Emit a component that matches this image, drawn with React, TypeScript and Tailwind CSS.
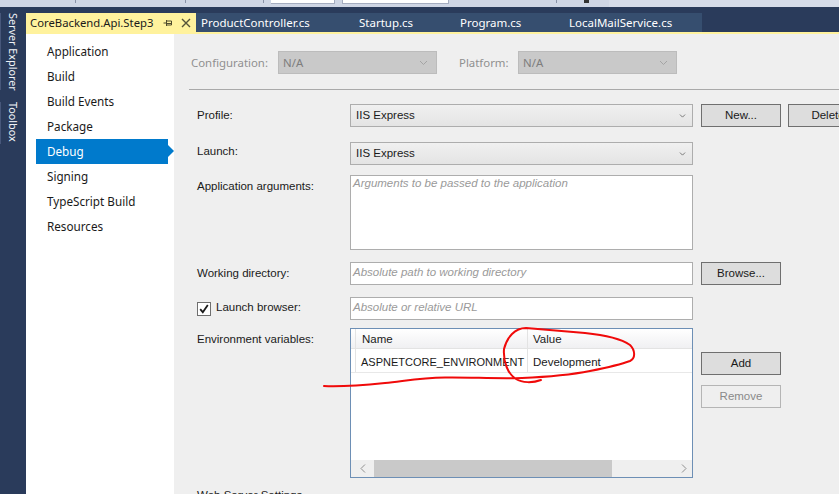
import React from "react";

const font = { fontFamily: '"Noto Sans", sans-serif' };

function Chevron({ className = "" }: { className?: string }) {
  return (
    <svg width="9" height="6" viewBox="0 0 9 6" className={className} fill="none" stroke="currentColor" strokeWidth="1">
      <path d="M1 1 L4.5 4.5 L8 1" />
    </svg>
  );
}

function Select({ label, width, disabled }: { label: string; width: string; disabled?: boolean }) {
  return disabled ? (
    <div className={`${width} h-[23px] flex items-center justify-between pl-1 pr-2 bg-[#c9c9c9] border border-[#bcbcbc] text-[#7d7d7d]`}>
      <span>{label}</span>
      <Chevron className="text-[#a4a4a4]" />
    </div>
  ) : (
    <div className={`${width} h-[23px] flex items-center justify-between pl-[5px] pr-[5px] bg-gradient-to-b from-[#f0f0f0] to-[#e4e4e4] border border-[#adadad] text-[#1a1a1a] font-['Liberation_Sans'] text-[11.5px]`}>
      <span className="pb-[2px]">{label}</span>
      <Chevron className="text-[#555555] scale-75" />
    </div>
  );
}

function Btn({ label, disabled, className = "" }: { label: string; disabled?: boolean; className?: string }) {
  return (
    <div
      className={`h-[23px] w-20 shrink-0 flex items-center justify-center border font-['Liberation_Sans'] text-[11.5px] pb-[1px] ${
        disabled ? "border-[#b5b5b5] text-[#8a8a8a] bg-[#efefef]" : "border-[#6f6f6f] text-[#1a1a1a] bg-[#dddddd]"
      } ${className}`}
    >
      {label}
    </div>
  );
}

function Input({ placeholder }: { placeholder: string }) {
  return (
    <div className="w-[343px] h-[23px] shrink-0 flex items-center pl-[2px] pb-[3px] bg-white border border-[#adadad] italic text-[#9a9a9a]">
      {placeholder}
    </div>
  );
}

function Label({ children, className = "" }: { children: React.ReactNode; className?: string }) {
  return <div className={`w-[153px] shrink-0 text-[#1a1a1a] ${className}`}>{children}</div>;
}

const nav = ["Application", "Build", "Build Events", "Package", "Debug", "Signing", "TypeScript Build", "Resources"];

export default function App() {
  return (
    <div style={font} className="relative w-[839px] h-[494px] overflow-hidden flex flex-col text-[12px] leading-[16px] bg-[#2a3b5b]">
      {/* IDE toolbar strip */}
      <div className="h-[7px] shrink-0 flex bg-[#d6dce9]">
        <div className="w-[609px] flex items-start bg-[#cfd6e5]">
          <div className="ml-[75px] w-px h-[3px] bg-[#8a93a8]" />
          <div className="ml-[109px] w-px h-[3px] bg-[#8a93a8]" />
          <div className="ml-[77px] w-px h-[3px] bg-[#8a93a8]" />
          <div className="ml-[7px] w-[64px] h-[4px] bg-white border-r border-b border-[#a5adc0]" />
          <div className="ml-[7px] w-[107px] h-[4px] bg-white border-x border-b border-[#a5adc0]" />
          <div className="ml-[107px] w-px h-[3px] bg-[#8a93a8]" />
          <div className="ml-[27px] w-[5px] h-[3px] bg-[#333333]" />
        </div>
      </div>

      <div className="flex-1 min-h-0 flex">
        {/* Side rail */}
        <div className="w-[26px] shrink-0 pt-[6px] flex flex-col items-stretch gap-[12px] text-[#f1f3f7] text-[10.8px]">
          <div className="h-[77px] flex justify-center pr-[2px] border-l border-[#47577a]">
            <span className="[writing-mode:vertical-rl] whitespace-nowrap">Server Explorer</span>
          </div>
          <div className="h-[42px] flex justify-center pr-[2px] border-l border-[#47577a]">
            <span className="[writing-mode:vertical-rl] whitespace-nowrap">Toolbox</span>
          </div>
        </div>

        <div className="flex-1 min-w-0 flex flex-col pt-[6px]">
          {/* Tabs */}
          <div className="h-[19px] shrink-0 flex items-center text-[11.3px]">
            <div className="w-[170px] h-full shrink-0 flex items-center pl-[4px] bg-[#fff29d] text-[#1a1a1a]">
              <span className="w-[133px] shrink-0">CoreBackend.Api.Step3</span>
              <svg width="10" height="10" viewBox="0 0 10 10" className="text-[#4d4a2c]" fill="none" stroke="currentColor">
                <path d="M0.5 5 H3.5 M3.5 2 V8 M3.5 3 H8.5 V7 H3.5 M3.5 5.5 H8.5" />
              </svg>
              <svg width="10" height="10" viewBox="0 0 10 10" className="ml-[8px] text-[#555339]" fill="none" stroke="currentColor" strokeWidth="1.4">
                <path d="M1 1 L9 9 M9 1 L1 9" />
              </svg>
            </div>
            <div className="w-[506px] h-full shrink-0 flex items-center bg-[#364e6f] text-white whitespace-nowrap text-[11.5px]">
              <span className="ml-[5px] w-[158px] shrink-0">ProductController.cs</span>
              <span className="w-[101px] shrink-0">Startup.cs</span>
              <span className="w-[109px] shrink-0">Program.cs</span>
              <span>LocalMailService.cs</span>
            </div>
          </div>
          <div className="h-[2px] shrink-0 bg-[#fff29d]" />

          <div className="flex-1 min-h-0 flex">
            {/* Property page nav */}
            <div className="w-[148px] shrink-0 bg-white pt-[5px] pl-[10px] text-[#1a1a1a] text-[11.7px]">
              {nav.map((n) =>
                n === "Debug" ? (
                  <div key={n} className="relative w-[132px] h-[25px] flex items-center pl-[11px] pb-[2px] bg-[#007acc] text-white">
                    {n}
                    <div className="absolute left-full top-[6px] border-y-[6px] border-y-transparent border-l-[6px] border-l-[#007acc]" />
                  </div>
                ) : (
                  <div key={n} className="h-[25px] flex items-center pl-[11px] pb-[2px]">{n}</div>
                )
              )}
            </div>

            {/* Debug page */}
            <div className="flex-1 min-w-0 bg-[#efefef] overflow-hidden pl-[15px] pt-[17px]">
              <div className="flex items-center h-[23px] text-[#8f8f8f] whitespace-nowrap text-[11.4px]">
                <span className="ml-[2px] w-[87px] shrink-0">Configuration:</span>
                <Select label="N/A" width="w-[159px] shrink-0" disabled />
                <span className="ml-[22px] w-[59px] shrink-0">Platform:</span>
                <Select label="N/A" width="w-[159px] shrink-0" disabled />
              </div>
              <div className="mt-[15px] h-px bg-[#a9a9a9] w-[700px]" />

              <div className="pl-[8px] w-[800px] font-['Liberation_Sans'] text-[11.5px]">
                <div className="mt-[14px] flex items-center h-[23px]">
                  <Label className="pb-[2px]">Profile:</Label>
                  <Select label="IIS Express" width="w-[343px] shrink-0" />
                  <Btn label="New..." className="ml-[8px]" />
                  <Btn label="Delete" className="ml-[7px]" />
                </div>
                <div className="mt-[15px] flex items-center h-[23px]">
                  <Label className="pb-[6px]">Launch:</Label>
                  <Select label="IIS Express" width="w-[343px] shrink-0" />
                </div>
                <div className="mt-[10px] flex items-start h-[75px]">
                  <div className="pt-[3px]"><Label>Application arguments:</Label></div>
                  <div className="w-[343px] h-[75px] shrink-0 pl-[2px] bg-white border border-[#adadad] italic text-[#9a9a9a]">
                    <div className="-mt-px">Arguments to be passed to the application</div>
                  </div>
                </div>
                <div className="mt-[12px] flex items-center h-[23px]">
                  <Label className="pb-[2px]">Working directory:</Label>
                  <Input placeholder="Absolute path to working directory" />
                  <Btn label="Browse..." className="ml-[8px]" />
                </div>
                <div className="mt-[12px] flex items-center h-[23px]">
                  <div className="w-[153px] shrink-0 flex items-center gap-[5px] text-[#1a1a1a]">
                    <div className="w-[14px] h-[14px] flex items-center justify-center bg-white border border-[#6f6f6f]">
                      <svg width="10" height="10" viewBox="0 0 10 10" fill="none" stroke="#1a1a1a" strokeWidth="1.8">
                        <path d="M1.2 5.2 L3.8 8.2 L8.8 1" />
                      </svg>
                    </div>
                    <span className="pb-[3px]">Launch browser:</span>
                  </div>
                  <Input placeholder="Absolute or relative URL" />
                </div>
                <div className="mt-[8px] flex items-start">
                  <div className="pt-[3px]"><Label>Environment variables:</Label></div>
                  <div className="w-[343px] h-[150px] shrink-0 flex flex-col bg-white border border-[#6d8fb5] text-[#1a1a1a]">
                    <div className="h-[20px] shrink-0 flex bg-gradient-to-b from-white to-[#f0f0f2] border-b border-[#e3e3e3]">
                      <div className="w-[5px] shrink-0 border-r border-[#e3e3e3]" />
                      <div className="w-[172px] shrink-0 pl-[6px] pt-[1px] flex items-center border-r border-[#e3e3e3]">Name</div>
                      <div className="pl-[5px] pt-[1px] flex items-center">Value</div>
                    </div>
                    <div className="h-[24px] shrink-0 flex border-b border-[#e8e8e8] whitespace-nowrap">
                      <div className="w-[5px] shrink-0 border-r border-[#e3e3e3]" />
                      <div className="w-[172px] shrink-0 pl-[5px] pt-[2px] flex items-center border-r border-[#e3e3e3] text-[11px]">ASPNETCORE_ENVIRONMENT</div>
                      <div className="pl-[5px] pt-[2px] flex items-center">Development</div>
                    </div>
                    <div className="flex-1" />
                    <div className="h-[17px] shrink-0 flex bg-[#efefef] text-[#8f8f8f]">
                      <div className="w-[23px] shrink-0 flex items-center justify-center">
                        <svg width="6" height="9" viewBox="0 0 6 9" fill="none" stroke="currentColor"><path d="M5 0.5 L1 4.5 L5 8.5" /></svg>
                      </div>
                      <div className="w-[238px] shrink-0 bg-[#c9c9c9]" />
                      <div className="flex-1 flex items-center justify-end pr-[5px]">
                        <svg width="6" height="9" viewBox="0 0 6 9" fill="none" stroke="currentColor"><path d="M1 0.5 L5 4.5 L1 8.5" /></svg>
                      </div>
                    </div>
                  </div>
                  <div className="ml-[8px] mt-[24px] flex flex-col gap-[10px]">
                    <Btn label="Add" />
                    <Btn label="Remove" disabled />
                  </div>
                </div>
                <div className="mt-[9px] text-[#1a1a1a]">Web Server Settings</div>
              </div>
            </div>
          </div>
        </div>
      </div>

      {/* Red ink annotation */}
      <svg className="absolute inset-0 pointer-events-none" width="839" height="494" viewBox="0 0 839 494" fill="none" stroke="#f00a0a" strokeWidth="2" strokeLinecap="round" strokeLinejoin="round">
        <path d="M324 386 C345 387 365 385 385 383 C405 381 420 378 445 377.500 C470 377 495 379 522 378 C545 377 570 375 590 371 C605 368 622 364 630 361 C636 358 635 350 630 345 C620 338 605 335 585 333 C560 331 540 329 526 328 C515 328 507 337 504 349 C503 362 508 374 516 379 C522 383 533 383 541 380" />
      </svg>
    </div>
  );
}
